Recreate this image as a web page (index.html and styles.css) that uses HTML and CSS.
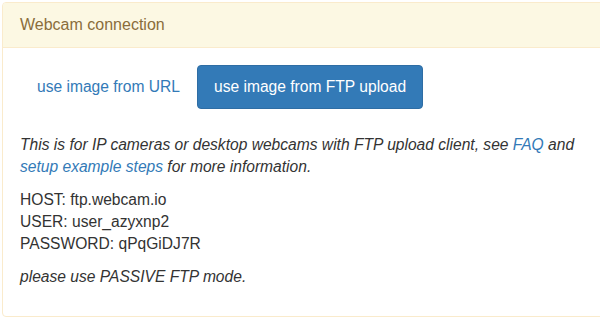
FILE: index.html
```html
<!DOCTYPE html>
<html lang="en">
<head>
  <meta charset="UTF-8" />
  <title>Webcam connection</title>
  <link rel="stylesheet" href="styles.css">
</head>
<body>

  <!-- webcam panel -->
  <div class="panel">
    <div class="panel-heading">Webcam connection</div>

    <div class="panel-body">
      <div class="source-switch">
        <a class="btn btn-link" href="#">use image from URL</a>
        <a class="btn btn-primary" href="#">use image from FTP upload</a>
      </div>

      <p class="note">This is for IP cameras or desktop webcams with FTP upload client, see <a href="#">FAQ</a> and <a href="#">setup example steps</a> for more information.</p>

      <p class="creds">
        HOST: ftp.webcam.io<br>
        USER: user_azyxnp2<br>
        PASSWORD: qPqGiDJ7R
      </p>

      <p class="note">please use PASSIVE FTP mode.</p>
    </div>
  </div>

</body>
</html>
```

FILE: styles.css
```css
html, body {
  overflow: hidden;
}

body {
  margin: 0;
  padding: 2px 0 0 2px;
  font-family: "Liberation Sans", Arial, sans-serif;
  font-size: 15.6px;
  line-height: 22px;
  color: #333;
  background: #fff;
}

a {
  color: #337ab7;
  text-decoration: none;
}

.panel {
  width: 620px;
  border: 1px solid #faebcc;
  border-radius: 4px;
  background: #fff;
}

.panel-heading {
  padding: 11px 17px;
  font-size: 16px;
  line-height: 22px;
  color: #8a6d3b;
  background-color: #fcf8e3;
  border-bottom: 1px solid #faebcc;
  border-radius: 3px 3px 0 0;
}

.panel-body {
  padding: 17px 17px 17px;
}

/* source buttons */
.source-switch {
  display: flex;
  gap: 0;
  margin-bottom: 25px;
}

.btn {
  display: inline-block;
  padding: 10px 16px;
  font-size: 15.6px;
  line-height: 22px;
  border: 1px solid transparent;
  border-radius: 4px;
  white-space: nowrap;
}

.btn-link {
  color: #337ab7;
}

.btn-primary {
  color: #fff;
  background-color: #337ab7;
  border-color: #2e6da4;
}

.panel-body p {
  margin: 0 0 11px;
}

.note {
  font-style: italic;
}
```
